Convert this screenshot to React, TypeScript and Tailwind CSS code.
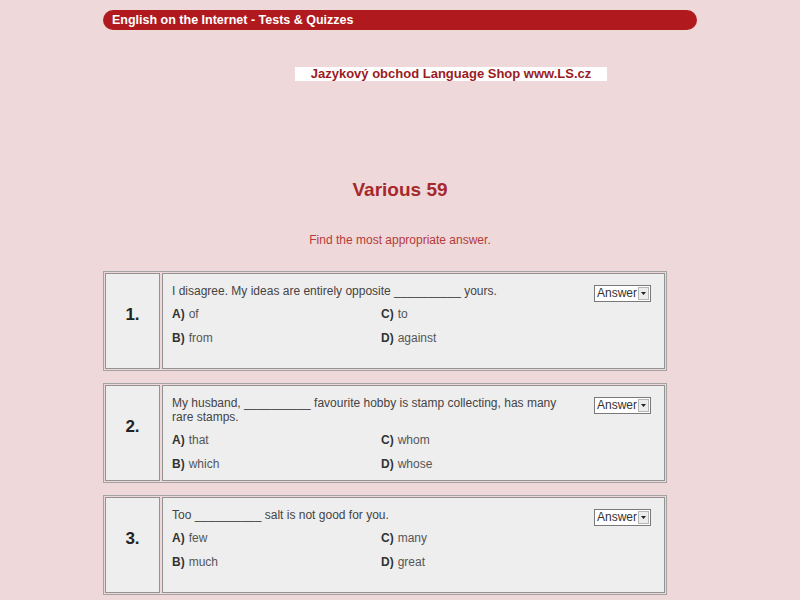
import React from 'react';

type Question = {
  num: number;
  text: string;
  options: [string, string, string, string];
};

const questions: Question[] = [
  {
    num: 1,
    text: 'I disagree. My ideas are entirely opposite __________ yours.',
    options: ['of', 'to', 'from', 'against'],
  },
  {
    num: 2,
    text: 'My husband, __________ favourite hobby is stamp collecting, has many rare stamps.',
    options: ['that', 'whom', 'which', 'whose'],
  },
  {
    num: 3,
    text: 'Too __________ salt is not good for you.',
    options: ['few', 'many', 'much', 'great'],
  },
];

function AnswerSelect() {
  return (
    <div className="mt-[1px] -mb-[4px] flex h-[17px] w-[57px] shrink-0 items-center border border-[#7a7a7a] bg-white">
      <span className="pl-[2px] text-[12px] leading-[15px] text-[#333]">Answer</span>
      <span className="ml-auto mr-[1px] flex h-[13px] w-[11px] items-center justify-center border border-[#b5b5b5] bg-[#ececec]">
        <svg width="5" height="3" viewBox="0 0 5 3">
          <path d="M0 0h5L2.5 3z" fill="#222" />
        </svg>
      </span>
    </div>
  );
}

function Option({ label, value }: { label: string; value: string }) {
  return (
    <div className="flex h-[24px] items-center text-[12px] text-[#555]">
      <span className="font-bold text-[#333]">{label})</span>
      <span className="ml-[4px]">{value}</span>
    </div>
  );
}

function QuestionBox({ q }: { q: Question }) {
  const labels = ['A', 'C', 'B', 'D'];
  return (
    <div className="flex h-[100px] w-[564px] gap-[2px] border border-[#a3a3a3] p-[1px]">
      {/* number */}
      <div className="w-[55px] border border-[#929292] bg-[#eeeeee] pt-[32px] text-center text-[17px] font-bold leading-[18px] text-[#222]">
        {q.num}.
      </div>
      {/* question */}
      <div className="flex-1 border border-[#929292] bg-[#eeeeee] pl-[9px] pr-[13px] pt-[10px]">
        <div className="flex items-start justify-between">
          <p className="w-[400px] text-[12px] leading-[14px] text-[#444]">{q.text}</p>
          <AnswerSelect />
        </div>
        <div className="mt-[4px] grid grid-cols-[209px_1fr]">
          {q.options.map((o, i) => (
            <Option key={i} label={labels[i]} value={o} />
          ))}
        </div>
      </div>
    </div>
  );
}

export default function App() {
  return (
    <div
      className="min-h-[600px] w-full bg-[#efd8d9] pt-[10px]"
      style={{ fontFamily: '"Liberation Sans", Arial, sans-serif' }}
    >
      <div className="mx-auto w-[594px]">
        <div className="h-[20px] rounded-full bg-[#b01a1e] pl-[9px] text-[12.5px] font-bold leading-[20px] text-white">
          English on the Internet - Tests &amp; Quizzes
        </div>

        <div className="ml-[192px] mt-[37px] h-[14px] w-[312px] bg-white text-center text-[13px] font-bold leading-[14px] text-[#9b1b24]">
          Jazykový obchod Language Shop www.LS.cz
        </div>

        <h1 className="mt-[97px] text-center text-[19px] font-bold leading-[24px] text-[#a6282c]">
          Various 59
        </h1>
        <p className="mt-[31px] text-center text-[12px] leading-[14px] text-[#b43a3c]">
          Find the most appropriate answer.
        </p>

        <div className="mt-[24px] flex flex-col gap-[12px]">
          {questions.map((q) => (
            <QuestionBox key={q.num} q={q} />
          ))}
        </div>
      </div>
    </div>
  );
}
